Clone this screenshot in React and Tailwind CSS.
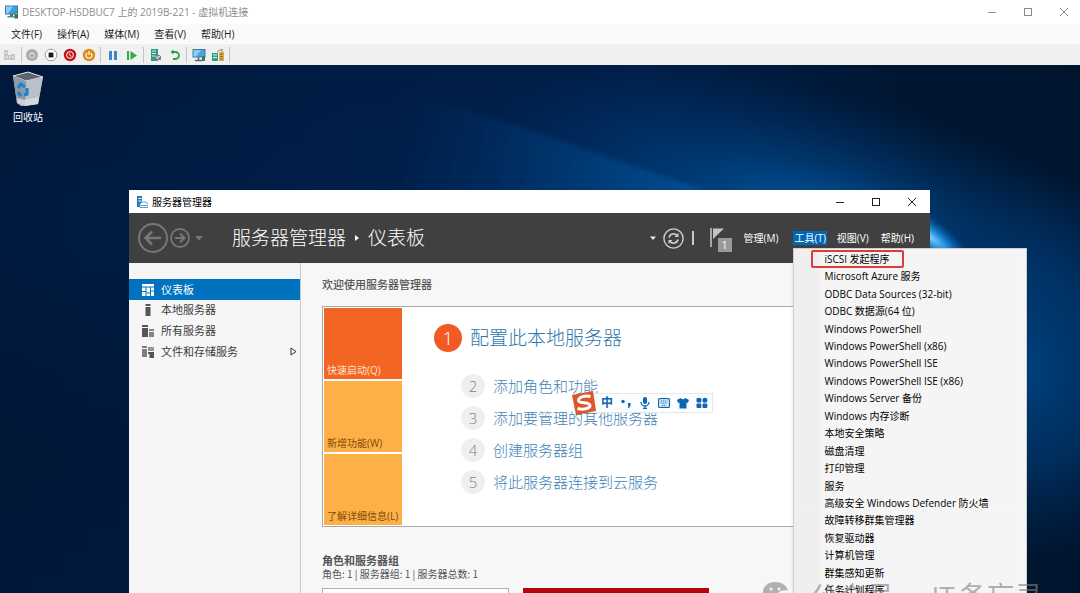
import React from "react";

const tools = [
  "iSCSI 发起程序",
  "Microsoft Azure 服务",
  "ODBC Data Sources (32-bit)",
  "ODBC 数据源(64 位)",
  "Windows PowerShell",
  "Windows PowerShell (x86)",
  "Windows PowerShell ISE",
  "Windows PowerShell ISE (x86)",
  "Windows Server 备份",
  "Windows 内存诊断",
  "本地安全策略",
  "磁盘清理",
  "打印管理",
  "服务",
  "高级安全 Windows Defender 防火墙",
  "故障转移群集管理器",
  "恢复驱动器",
  "计算机管理",
  "群集感知更新",
  "任务计划程序",
];

function Wallpaper() {
  return (
    <svg className="absolute inset-0 h-full w-full" viewBox="0 0 1080 528" preserveAspectRatio="none" aria-hidden="true">
      <defs>
        <linearGradient id="base" x1="0" y1="0" x2="1" y2="0">
          <stop offset="0" stopColor="#001a3f" />
          <stop offset="0.3" stopColor="#001f4a" />
          <stop offset="0.6" stopColor="#002250" />
          <stop offset="0.85" stopColor="#001733" />
          <stop offset="1" stopColor="#00152f" />
        </linearGradient>
        <linearGradient id="left" x1="0" y1="0" x2="0" y2="1">
          <stop offset="0" stopColor="#001026" stopOpacity="0.2" />
          <stop offset="0.3" stopColor="#001026" stopOpacity="0" />
          <stop offset="0.75" stopColor="#001026" stopOpacity="0.35" />
          <stop offset="1" stopColor="#001026" stopOpacity="0.2" />
        </linearGradient>
        <radialGradient id="glow" gradientUnits="userSpaceOnUse" cx="0" cy="0" r="1" gradientTransform="translate(820 150) rotate(14) scale(360 125)">
          <stop offset="0" stopColor="#0060b0" stopOpacity="0.9" />
          <stop offset="0.4" stopColor="#004c92" stopOpacity="0.55" />
          <stop offset="1" stopColor="#003a78" stopOpacity="0" />
        </radialGradient>
        <radialGradient id="right" gradientUnits="userSpaceOnUse" cx="0" cy="0" r="1" gradientTransform="translate(1030 305) scale(150 200)">
          <stop offset="0" stopColor="#00488a" stopOpacity="0.85" />
          <stop offset="0.5" stopColor="#003a74" stopOpacity="0.65" />
          <stop offset="1" stopColor="#002a58" stopOpacity="0" />
        </radialGradient>
        <linearGradient id="beam" gradientUnits="userSpaceOnUse" x1="400" y1="60" x2="740" y2="130">
          <stop offset="0" stopColor="#004f98" stopOpacity="0" />
          <stop offset="0.5" stopColor="#005099" stopOpacity="0.35" />
          <stop offset="1" stopColor="#0068bd" stopOpacity="0.5" />
        </linearGradient>
        <radialGradient id="flare" gradientUnits="userSpaceOnUse" cx="0" cy="0" r="1" gradientTransform="translate(930 172) rotate(38) scale(58 18)">
          <stop offset="0" stopColor="#7fd0ff" />
          <stop offset="0.4" stopColor="#1f94e6" stopOpacity="0.85" />
          <stop offset="1" stopColor="#0062b8" stopOpacity="0" />
        </radialGradient>
        <filter id="soft" x="-10%" y="-10%" width="120%" height="120%">
          <feGaussianBlur stdDeviation="2" />
        </filter>
      </defs>
      <rect width="1080" height="528" fill="url(#base)" />
      <rect width="1080" height="528" fill="url(#left)" />
      <rect width="1080" height="528" fill="url(#glow)" />
      <rect width="1080" height="528" fill="url(#right)" />
      <path d="M380 25L470 45L560 76L640 103L725 132L380 140Z" fill="url(#beam)" filter="url(#soft)" />
      <rect width="1080" height="528" fill="url(#flare)" />
    </svg>
  );
}

function MonitorIcon({ className }) {
  return (
    <svg className={className} viewBox="0 0 14 14" aria-hidden="true">
      <rect x="0.5" y="1" width="12" height="8" fill="#3fa0dc" stroke="#3d7aa8" />
      <path d="M1 1.500H8L3 8.500H1Z" fill="#8ed0f4" />
      <path d="M5 9h3v2H5z" fill="#54707f" />
      <path d="M2.500 11h7v1.500h-7z" fill="#3d9a62" />
      <rect x="9.500" y="7" width="3.500" height="6.500" fill="#3c6f5c" />
      <rect x="10.200" y="8" width="2.200" height="1" fill="#9be0a8" />
    </svg>
  );
}

function WindowButtons({ className }) {
  return (
    <div className={className}>
      <button aria-label="最小化" className="flex h-6 w-9 items-center justify-center">
        <svg className="size-3" viewBox="0 0 12 12" fill="none" stroke="currentColor"><path d="M2 6.500h8" /></svg>
      </button>
      <button aria-label="最大化" className="flex h-6 w-9 items-center justify-center">
        <svg className="size-3" viewBox="0 0 12 12" fill="none" stroke="currentColor"><rect x="2.500" y="2.500" width="7" height="7" /></svg>
      </button>
      <button aria-label="关闭" className="flex h-6 w-9 items-center justify-center">
        <svg className="size-3" viewBox="0 0 12 12" fill="none" stroke="currentColor"><path d="M2 2l8 8M10 2l-8 8" /></svg>
      </button>
    </div>
  );
}

function ToolButton({ label, children }) {
  return (
    <button aria-label={label} className="flex size-[19px] shrink-0 items-center justify-center">
      <svg className="size-[14px]" viewBox="0 0 14 14" fill="none">{children}</svg>
    </button>
  );
}

function Divider() {
  return <span className="mx-[2px] h-4 w-px bg-[#c4c4c4]" />;
}

function Toolbar() {
  return (
    <div className="flex h-[21px] items-center bg-[#f0f0f0]" role="toolbar">
      <ToolButton label="Ctrl+Alt+Del">
        <path d="M1 2h4v5h3v-1h4v6H1z" fill="#c6c6c6" /><path d="M2 9h3M6 9h2M9 9h2M2 5h2" stroke="#f3f3f3" />
      </ToolButton>
      <span className="ml-[2px] h-4 w-px bg-[#c4c4c4]" />
      <ToolButton label="启动">
        <circle cx="7" cy="7" r="6" fill="#a9a9a9" /><circle cx="7" cy="7.500" r="2.500" stroke="#e3e3e3" /><path d="M7 3.500v3" stroke="#e3e3e3" />
      </ToolButton>
      <ToolButton label="关闭虚拟机">
        <circle cx="7" cy="7" r="5.800" fill="#fff" stroke="#9b9b9b" /><rect x="4.600" y="4.600" width="4.800" height="4.800" fill="#1a1a1a" />
      </ToolButton>
      <ToolButton label="强行关闭">
        <circle cx="7" cy="7" r="6.200" fill="#c3141b" /><circle cx="7" cy="7" r="3.400" stroke="#fff" /><path d="M6 5.500l2 3" stroke="#fff" />
      </ToolButton>
      <ToolButton label="保存">
        <circle cx="7" cy="7" r="6.200" fill="#dc8a1c" /><path d="M5 5a3 3 0 1 0 4 0M7 3v4" stroke="#fff" strokeWidth="1.200" />
      </ToolButton>
      <Divider />
      <ToolButton label="暂停">
        <path d="M3 3h3v9H3zM8 3h3v9H8z" fill="#3d86c6" />
      </ToolButton>
      <ToolButton label="继续">
        <path d="M2 3h2v9H2zM5.500 3l6.500 4.500-6.500 4.500z" fill="#2fae3e" />
      </ToolButton>
      <Divider />
      <ToolButton label="检查点">
        <path d="M2 1h7v12H2z" fill="#2c9a86" /><path d="M3 3h4M3 5.500h4M3 8h3" stroke="#d4f0ea" /><path d="M6 7h6v5H6z" fill="#74838c" /><path d="M8 11l4-4M6.500 9h3" stroke="#e9eef0" />
      </ToolButton>
      <ToolButton label="还原">
        <path d="M4 4h3.500a3.200 3.200 0 0 1 0 7H5" stroke="#2f9e44" strokeWidth="1.800" /><path d="M5.500 1.500L2.500 4l3 2.500z" fill="#2f9e44" />
      </ToolButton>
      <Divider />
      <ToolButton label="增强会话">
        <rect x="1" y="1.500" width="12" height="7.500" fill="#45a7e2" stroke="#3d7aa8" /><path d="M1.500 2H9L4 8.500H1.500Z" fill="#86ccf2" /><path d="M3 12.500h7M6.500 9v3" stroke="#4d6572" strokeWidth="1.500" /><path d="M10 8h3v5h-3z" fill="#3c7a5c" />
      </ToolButton>
      <ToolButton label="共享">
        <path d="M1 5h6v8H1z" fill="#2f9c83" /><path d="M2 7h4M2 9.500h4" stroke="#d8f1ea" /><path d="M8 4h5v9H8z" fill="#d9ae42" /><path d="M9 6h3M9 8.500h3M9 11h3" stroke="#7f6b34" /><path d="M6 4l5-3v3" stroke="#8e8e5e" />
      </ToolButton>
      <Divider />
    </div>
  );
}

function RecycleBin() {
  return (
    <button className="absolute left-1 top-1 flex w-12 flex-col items-center text-white">
      <svg className="size-10" viewBox="0 0 40 40" aria-hidden="true">
        <path d="M5 7L20 3L35 8L30 35L13 37L9 34Z" fill="#b4bcc4" />
        <path d="M5 7L20 3L35 8L18 12Z" fill="#5d656d" stroke="#dfe4e8" strokeWidth="1" />
        <path d="M18 12L35 8L30 35L17 37Z" fill="#b9c0c7" />
        <path d="M5 7L18 12L17 37L9 34Z" fill="#8f99a3" />
        <path d="M9 29L17 31L31 28L30 35L17 37L9 34Z" fill="#e2e6ea" opacity="0.7" />
        <g fill="none" stroke="#1e82d2" strokeWidth="3.200">
          <path d="M10 19l3-4 4 3" />
          <path d="M19 19l0 6-3 1" />
          <path d="M13 27l-3-4" />
        </g>
      </svg>
      <span className="text-[10px] leading-4">回收站</span>
    </button>
  );
}

const sideItems = [
  {
    label: "仪表板",
    active: true,
    icon: <path d="M1 1h12v2.500H1zM1 4.500h3.500v3.500H1zM1 9h3.500v4H1zM5.500 4.500h3.500v5H5.500zM5.500 10.500h3.500v2.500H5.500zM10 4.500h3v3h-3zM10 8.500h3v4.500h-3z" fill="currentColor" />,
  },
  {
    label: "本地服务器",
    icon: <path d="M4.500 1h5v2h-5zM4.500 4h5v9h-5z" fill="currentColor" />,
  },
  {
    label: "所有服务器",
    icon: (
      <>
        <path d="M1 1h6v2H1zM1 4h6v9H1z" fill="currentColor" />
        <path d="M8 5h5v2H8zM8 8h5v5H8z" fill="currentColor" opacity="0.7" />
      </>
    ),
  },
  {
    label: "文件和存储服务",
    more: true,
    icon: (
      <>
        <path d="M1 1h5v2H1zM1 4h5v8H1z" fill="currentColor" opacity="0.75" />
        <path d="M7 2h5l1 1v3H7z" fill="currentColor" opacity="0.6" />
        <path d="M7 7h6v6H8.500V9H7z" fill="currentColor" />
      </>
    ),
  },
];

function Sidebar() {
  return (
    <nav className="w-[172px] shrink-0 border-r border-[#c6c6c6] bg-[#f6f6f6] pt-4">
      {sideItems.map((item) => (
        <a
          key={item.label}
          href="#"
          className={
            item.active
              ? "flex h-[21px] items-center gap-[6px] bg-[#0072bf] px-3 text-[11px] leading-4 text-white"
              : "flex h-[21px] items-center gap-[6px] px-3 pb-[2px] text-[11px] leading-4 text-[#3c3c3c]"
          }
        >
          <svg className={item.active ? "size-[14px]" : "size-[14px] text-[#555]"} viewBox="0 0 14 14" aria-hidden="true">{item.icon}</svg>
          <span className="grow">{item.label}</span>
          {item.more && (
            <svg className="-mr-[10px] size-[9px]" viewBox="0 0 9 9" fill="none" stroke="#333" aria-hidden="true"><path d="M2 1v7l5-3.500z" /></svg>
          )}
        </a>
      ))}
    </nav>
  );
}

const tiles = [
  { label: "快速启动(Q)", cls: "flex h-[71px] items-end whitespace-nowrap bg-[#f26522] px-[3px] pb-[1px] text-left text-[10px] leading-4 text-[#ffe3cc]" },
  { label: "新增功能(W)", cls: "flex h-[71px] items-end whitespace-nowrap bg-[#fdb045] px-[3px] pb-[1px] text-left text-[10px] leading-4 text-[#7d4a0c]" },
  { label: "了解详细信息(L)", cls: "flex h-[71px] items-end whitespace-nowrap bg-[#fdb045] px-[3px] pb-[1px] text-left text-[10px] leading-4 text-[#7d4a0c]" },
];

const steps = ["添加角色和功能", "添加要管理的其他服务器", "创建服务器组", "将此服务器连接到云服务"];

function ImeBar() {
  return (
    <div className="absolute left-[248px] top-[85px] flex h-[21px] items-center">
      <svg className="z-10 size-[26px]" viewBox="0 0 26 26" aria-hidden="true">
        <path d="M1 5L22 1L25 21L5 25Z" fill="#d9572a" />
        <path d="M19.500 6.500C14 5 7.500 7 7.500 10.500C7.500 14 19 11.500 19 15.500C19 18.800 12 20 6.500 18.500" fill="none" stroke="#fff" strokeWidth="3" />
      </svg>
      <div className="-ml-1 flex h-5 w-[120px] items-center justify-between border border-l-0 border-[#e3e8ee] bg-[#fcfdff] pl-2 pr-1 text-[#0b66b5]">
        <span className="text-[12px] font-bold leading-4">中</span>
        <svg className="size-3" viewBox="0 0 12 12" aria-hidden="true"><circle cx="3" cy="4.500" r="1.700" fill="currentColor" /><path d="M8 6h2.500v2.500L9 11H7.800l.9-2.200H8z" fill="currentColor" /></svg>
        <svg className="size-3" viewBox="0 0 12 12" fill="none" stroke="currentColor" aria-hidden="true"><rect x="4" y="0" width="4" height="7" rx="2" fill="currentColor" stroke="none" /><path d="M2 5a4 4 0 0 0 8 0M6 9v2M4 11.500h4" strokeWidth="1.300" /></svg>
        <svg className="size-3" viewBox="0 0 12 12" fill="none" stroke="currentColor" aria-hidden="true"><rect x="0.600" y="1.600" width="10.800" height="8.800" rx="1" strokeWidth="1.200" /><path d="M2.500 4h7M2.500 6h7M3.500 8.200h5" strokeDasharray="1.500 0.500" /></svg>
        <svg className="size-3" viewBox="0 0 12 12" aria-hidden="true"><path d="M3.500 1C4.500 2.500 7.500 2.500 8.500 1L12 3L10.800 6L9.500 5.500V11.500H2.500V5.500L1.200 6L0 3Z" fill="currentColor" /></svg>
        <svg className="size-3" viewBox="0 0 12 12" aria-hidden="true"><rect x="0.500" y="1" width="4.800" height="4.500" rx="1" fill="currentColor" /><circle cx="8.900" cy="3.300" r="2.500" fill="currentColor" /><rect x="0.500" y="6.500" width="4.800" height="4.500" rx="1" fill="currentColor" /><rect x="6.500" y="6.500" width="4.800" height="4.500" rx="1" fill="currentColor" /></svg>
      </div>
    </div>
  );
}

function Dashboard() {
  return (
    <main className="min-w-0 grow bg-[#f7f7f7] pl-[21px] pt-[13px] text-[#555]">
      <h2 className="text-[11px] font-medium leading-[18px]">欢迎使用服务器管理器</h2>
      <section className="relative mt-3 flex border border-r-0 border-[#a9a9a9] bg-white">
        <div className="flex w-[79px] shrink-0 flex-col gap-[2px] py-[1px] pl-[1px]">
          {tiles.map((t) => (
            <button key={t.label} className={t.cls}>{t.label}</button>
          ))}
        </div>
        <div className="pl-8 pt-4 text-[#3f7fb5]">
          <a href="#" className="flex items-center gap-2 text-[19px] font-light leading-[30px] text-[#2f77ab]">
            <span className="flex size-7 items-center justify-center rounded-full bg-[#f15a22] text-[19px] text-white">1</span>
            配置此本地服务器
          </a>
          <ol className="mt-[17px] pl-[27px]">
            {steps.map((s, i) => (
              <li key={s} className="h-8">
                <a href="#" className="flex h-8 items-center gap-2 text-[15px] font-light leading-6">
                  <span className="flex size-6 items-center justify-center rounded-full bg-[#efefef] text-[15px] text-[#808080]">{i + 2}</span>
                  {s}
                </a>
              </li>
            ))}
          </ol>
        </div>
        <ImeBar />
      </section>
      <h2 className="mt-[27px] text-[11px] font-bold leading-[14px]">角色和服务器组</h2>
      <p className="font-['Noto_Sans_CJK_SC',sans-serif] text-[10px] leading-3">角色: 1 | 服务器组: 1 | 服务器总数: 1</p>
      <div className="flex gap-[14px] pt-2">
        <div className="h-20 w-[187px] border border-[#b0b0b0] bg-white" />
        <div className="h-20 w-[186px] bg-[#b3060f]" />
      </div>
    </main>
  );
}

function ToolsMenu() {
  return (
    <ul role="menu" className="absolute left-0 top-full z-20 mt-[3px] grid h-[352px] w-[234px] auto-rows-fr border border-[#cfcfcf] bg-[#f4f4f4] bg-linear-to-r from-[#efefef] from-10% to-[#f5f5f5] to-12% pt-[1px] shadow-sm">
      {tools.map((t, i) => (
        <li key={t} role="none" className="flex items-center">
          <button
            role="menuitem"
            className={
              i === 0
                ? "ml-[17px] h-[18px] w-[93px] rounded-[2px] border-2 border-[#e03a3a] pl-[11px] text-left text-[10px] leading-[14px] text-black"
                : "w-full pl-[30px] text-left text-[10px] leading-4 text-black"
            }
          >
            <span className="whitespace-nowrap">{t}</span>
          </button>
        </li>
      ))}
    </ul>
  );
}

function ServerManager() {
  return (
    <section className="absolute left-[129px] top-[125px] w-[801px] max-w-full bg-[#f7f7f7]">
      <header className="flex h-[23px] items-center bg-white pl-[7px]">
        <svg className="size-3" viewBox="0 0 12 12" fill="none" aria-hidden="true">
          <path d="M1 0h5v11H1z" fill="#2b78b8" /><path d="M2.500 2.500h3M2.500 5h3" stroke="#fff" /><path d="M4 11.500V8l2-2h4l2 2v3.500z" fill="#fff" stroke="#5aa0d0" /><path d="M5 9.500h6" stroke="#5aa0d0" />
        </svg>
        <h1 className="ml-1 grow text-[10px] leading-4 text-black">服务器管理器</h1>
        <WindowButtons className="flex text-[#222]" />
      </header>
      <div className="flex h-[50px] items-center bg-[#404040] pl-[9px] pr-[14px] text-white">
        <button aria-label="后退">
          <svg className="size-[30px]" viewBox="0 0 30 30" fill="none" stroke="#777"><circle cx="15" cy="15" r="14" strokeWidth="2" /><path d="M23 15H8M14 8.500L7.500 15L14 21.500" strokeWidth="2.500" /></svg>
        </button>
        <button aria-label="前进" className="ml-[2px]">
          <svg className="size-5" viewBox="0 0 20 20" fill="none" stroke="#777"><circle cx="10" cy="10" r="9" strokeWidth="1.800" /><path d="M5 10h9M10 5.500l4.500 4.500-4.500 4.500" strokeWidth="2" /></svg>
        </button>
        <button aria-label="历史记录" className="ml-[5px]">
          <svg className="size-2" viewBox="0 0 8 8"><path d="M0 2h8L4 6.500z" fill="#777" /></svg>
        </button>
        <div className="ml-[29px] flex grow items-center text-[19px] font-light leading-7">
          服务器管理器
          <svg className="mx-2 size-[6px]" viewBox="0 0 6 6" aria-hidden="true"><path d="M1 0l4 3-4 3z" fill="#fff" /></svg>
          仪表板
        </div>
        <button aria-label="下拉"><svg className="size-[6px]" viewBox="0 0 6 6"><path d="M0 1.500h6L3 5z" fill="#e8e8e8" /></svg></button>
        <button aria-label="刷新" className="ml-[7px]">
          <svg className="size-[21px]" viewBox="0 0 21 21" fill="none" stroke="#cfcfcf">
            <circle cx="10.500" cy="10.500" r="9.600" strokeWidth="1.400" />
            <path d="M6 9.500a4.600 4.600 0 0 1 8-2M15 11.500a4.600 4.600 0 0 1-8 2" strokeWidth="1.700" />
            <path d="M15.500 5v4h-4zM5.500 16v-4h4z" fill="#cfcfcf" stroke="none" />
          </svg>
        </button>
        <span className="ml-2 h-[14px] w-[2px] bg-[#c8c8c8]" />
        <button aria-label="通知" className="relative ml-4 h-7 w-[22px]">
          <svg className="h-[22px] w-[14px]" viewBox="0 0 14 22"><path d="M0 1h2v19H0z" fill="#a8a8a8" /><path d="M3 1.500h11L3 12z" fill="#c4c4c4" /></svg>
          <span className="absolute bottom-0 right-0 flex size-[14px] items-center justify-center bg-[#9a9a9a] text-[10px] leading-none text-white">1</span>
        </button>
        <div className="ml-[10px] flex items-center gap-2 text-[10px] leading-[14px]">
          <button className="mr-[5px] px-[2px]">管理(M)</button>
          <div className="relative">
            <button aria-expanded="true" className="bg-[#0068b5] px-[1px]">工具(T)</button>
            <ToolsMenu />
          </div>
          <button className="px-[2px]">视图(V)</button>
          <button className="px-[2px]">帮助(H)</button>
        </div>
      </div>
      <div className="flex">
        <Sidebar />
        <Dashboard />
      </div>
    </section>
  );
}

function Watermark() {
  return (
    <div className="pointer-events-none absolute left-[762px] top-[513px] z-30 flex items-center gap-4 whitespace-nowrap text-[28px] leading-9 text-[#808080]/60">
      <svg className="h-7 w-8" viewBox="0 0 32 28" aria-hidden="true">
        <path d="M13 0C6 0 1 4.500 1 10c0 3 2 6 4.500 7.500L4.500 21l4-2c1.500.5 3 .7 4.500.7C12 12 18 7 26 8.500C24.500 3 19.500 0 13 0z" fill="currentColor" />
        <path d="M22 11c-5 0-9 3.500-9 7.500s4 7.500 9 7.500c1 0 2-.2 3-.5l3.500 1.800-1-3c2.200-1.400 3.500-3.400 3.500-5.800 0-4-4-7.500-9-7.500z" fill="currentColor" />
        <circle cx="9" cy="7" r="1.500" fill="#f5f5f5" /><circle cx="17" cy="7" r="1.500" fill="#f5f5f5" />
      </svg>
      <div className="flex gap-[15px]">
        <span>公众号</span>
        <span>·</span>
        <span className="flex gap-1"><span>IT</span><span>备忘录</span></span>
      </div>
    </div>
  );
}

export default function App() {
  return (
    <div className="flex h-screen flex-col overflow-hidden bg-white font-['Open_Sans','Noto_Sans_CJK_SC',sans-serif] text-black">
      <header className="flex h-6 shrink-0 items-center bg-white pl-[5px] text-[#8c8c8c]">
        <MonitorIcon className="size-[14px]" />
        <span className="ml-[3px] grow text-[10px] leading-4">DESKTOP-HSDBUC7 上的 2019B-221 - 虚拟机连接</span>
        <WindowButtons className="-mr-[2px] flex" />
      </header>
      <nav className="flex h-5 shrink-0 items-center gap-[15px] bg-[#fafafa] pl-[11px] text-[10px] leading-4 text-[#1a1a1a]">
        <button>文件(F)</button>
        <button>操作(A)</button>
        <button>媒体(M)</button>
        <button>查看(V)</button>
        <button>帮助(H)</button>
      </nav>
      <Toolbar />
      <div className="relative grow overflow-hidden bg-[#001b3f]">
        <Wallpaper />
        <RecycleBin />
        <ServerManager />
        <Watermark />
      </div>
    </div>
  );
}
